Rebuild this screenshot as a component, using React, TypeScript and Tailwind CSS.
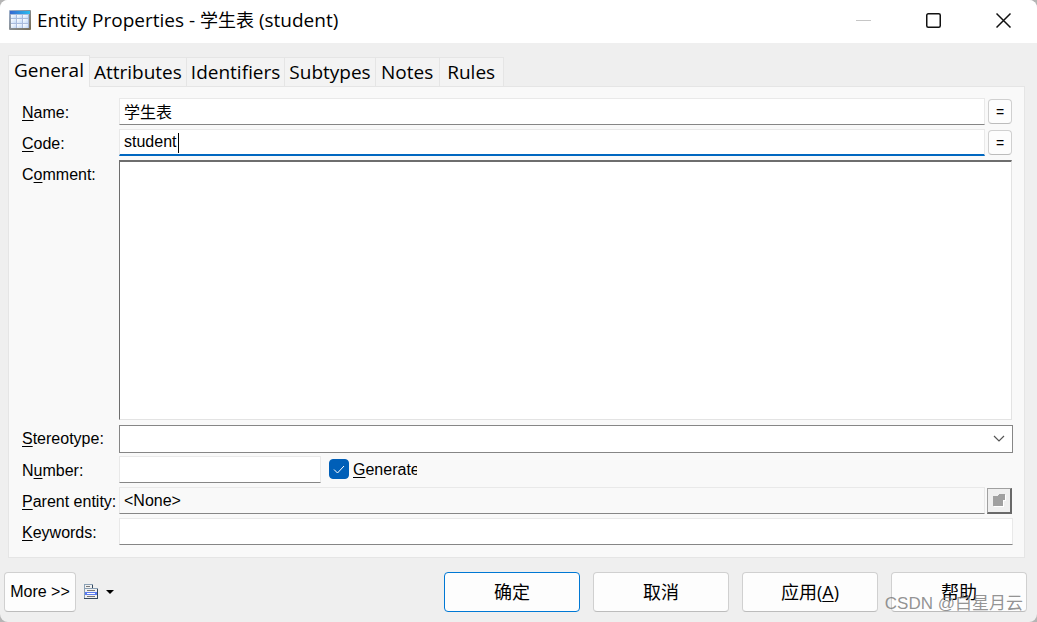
import React, { useState } from 'react';

const TABS = ['General', 'Attributes', 'Identifiers', 'Subtypes', 'Notes', 'Rules'];

const uiFont = "font-['Open_Sans','Noto_Sans_CJK_SC',sans-serif]";
const formFont = "font-['Liberation_Sans','Noto_Sans_CJK_SC',sans-serif]";

const fieldBase = 'block w-full min-w-0 border border-[#e9e9e9] px-1 outline-none';
const field = `${fieldBase} h-[27px] border-b-[#868686] bg-white pb-0.5`;

const TableIcon: React.FC = () => (
  <svg width="22" height="20" viewBox="0 0 22 20" aria-hidden="true">
    <defs>
      <linearGradient id="frame" x1="0" y1="0" x2="1" y2="1">
        <stop offset="0" stopColor="#9cb0cf" />
        <stop offset="1" stopColor="#756c55" />
      </linearGradient>
      <linearGradient id="head" x1="0" y1="0" x2="1" y2="0">
        <stop offset="0" stopColor="#3668d0" />
        <stop offset="1" stopColor="#29bdf0" />
      </linearGradient>
      <linearGradient id="cells" x1="0" y1="0" x2="1" y2="1">
        <stop offset="0" stopColor="#ffffff" />
        <stop offset="1" stopColor="#c3daf8" />
      </linearGradient>
    </defs>
    <rect width="22" height="20" rx="1" fill="url(#frame)" />
    <rect x="1" y="1" width="20" height="3" fill="url(#head)" />
    <rect x="2" y="4" width="18" height="14" fill="#a9bbdc" />
    {[2, 8, 14].map((x) =>
      [5, 9, 14].map((y) => (
        <rect key={`${x}-${y}`} x={x} y={y} width="5" height={y === 5 ? 3 : 4} fill="url(#cells)" />
      ))
    )}
  </svg>
);

const MenuIcon: React.FC = () => (
  <svg width="14" height="16" viewBox="0 0 14 16" shapeRendering="crispEdges" aria-hidden="true">
    <path d="M0 0h9v4h5v11H0z" fill="#8ba0b4" />
    <path d="M1 1h7v4h5v9H1z" fill="#f1f1f1" />
    <path d="M8 1h1v4H8zM13 5h1v10h-1zM0 14h14v1H0z" fill="#34475c" />
    <path d="M1 4h8v1H1z" fill="#8ba0b4" />
    <path d="M2 2h4v1H2zM3 6h8v1H3zM3 12h8v1H3z" fill="#777777" />
    <path d="M1 8h12v3H1z" fill="#5b7cf0" />
    <path d="M3 9h8v1H3z" fill="#ffffff" />
  </svg>
);

const Label: React.FC<{ id: string; before?: string; hot: string; after: string }> = ({
  id,
  before,
  hot,
  after,
}) => (
  <label htmlFor={id} className="h-[27px] whitespace-nowrap leading-[30px]">
    {before}
    <span className="underline underline-offset-2">{hot}</span>
    {after}
  </label>
);

const EqualsButton: React.FC<{ label: string }> = ({ label }) => (
  <button
    type="button"
    aria-label={label}
    className="h-[25px] w-6 shrink-0 rounded border border-[#d0d0d0] border-b-[#bcbcbc] bg-[#fdfdfd] text-sm leading-[22px]"
  >
    =
  </button>
);

const App: React.FC = () => {
  const [tab, setTab] = useState('General');
  const [name, setName] = useState('学生表');
  const [code, setCode] = useState('student');
  const [comment, setComment] = useState('');
  const [generate, setGenerate] = useState(true);

  const action =
    'h-10 max-w-[136px] flex-1 rounded border bg-[#fdfdfd] text-lg leading-6';
  const plain = `${action} border-[#d0d0d0] border-b-[#bcbcbc]`;

  return (
    <div className="bg-[#b5b5b5]">
      <div
        className={`relative flex min-h-screen flex-col overflow-hidden rounded-lg bg-[#efefef] text-black ${uiFont}`}
      >
        <header className="flex h-[43px] shrink-0 items-center bg-white pr-[25px] pb-[3px] pl-[9px]">
          <TableIcon />
          <h1 className="ml-1.5 flex-1 text-[19px]">
            Entity Properties - <span className="text-lg">学生表</span> (student)
          </h1>
          <div className="flex items-center gap-[54px]">
            <button type="button" aria-label="Minimize" disabled>
              <svg width="16" height="16" viewBox="0 0 16 16">
                <path d="M0 8.5h15" stroke="#c6c6c6" />
              </svg>
            </button>
            <button type="button" aria-label="Maximize">
              <svg width="16" height="16" viewBox="0 0 16 16" fill="none">
                <rect x="0.75" y="1.75" width="13.5" height="13.5" rx="1.5" stroke="#111111" strokeWidth="1.5" />
              </svg>
            </button>
            <button type="button" aria-label="Close">
              <svg width="16" height="16" viewBox="0 0 16 16">
                <path d="M0.5 1.5l14 14M14.5 1.5l-14 14" stroke="#111111" strokeWidth="1.5" />
              </svg>
            </button>
          </div>
        </header>

        <main className="flex flex-1 flex-col pt-3 pr-3 pl-2">
          <div role="tablist" className="z-10 -mb-px flex items-end text-[19px]">
            {TABS.map((t) => (
              <button
                key={t}
                type="button"
                role="tab"
                aria-selected={tab === t}
                onClick={() => setTab(t)}
                className={
                  tab === t
                    ? 'h-8 border border-b-0 border-[#e5e5e5] bg-[#f9f9f9] px-[5px] pb-1 leading-7'
                    : 'h-[30px] min-w-16 border border-l-0 border-[#e5e5e5] bg-[#f3f3f3] px-1 leading-7'
                }
              >
                {t}
              </button>
            ))}
          </div>

          <form
            role="tabpanel"
            className={`flex flex-1 flex-col border border-[#e5e5e5] bg-[#f9f9f9] pt-[11px] pr-[11px] pb-3 pl-[13px] text-base ${formFont}`}
          >
            <div className="grid flex-1 grid-cols-[97px_minmax(0,1fr)] grid-rows-[27px_27px_1fr_28px_27px_27px_27px] gap-y-1">
              <Label id="name" hot="N" after="ame:" />
              <div className="flex items-center gap-[3px] pr-px">
                <input id="name" className={field} value={name} onChange={(e) => setName(e.target.value)} />
                <EqualsButton label="Copy code from name" />
              </div>

              <Label id="code" hot="C" after="ode:" />
              <div className="flex items-center gap-[3px] pr-px">
                <div className="relative flex-1">
                  <input
                    id="code"
                    className={`${fieldBase} h-[27px] border-b-2 border-b-[#0067c0] bg-white`}
                    value={code}
                    onChange={(e) => setCode(e.target.value)}
                  />
                  <span className="absolute top-1 left-[59px] h-5 w-px bg-black" />
                </div>
                <EqualsButton label="Copy name from code" />
              </div>

              <Label id="comment" before="C" hot="o" after="mment:" />
              <textarea
                id="comment"
                className="mr-px block resize-none border border-t-2 border-[#e3e3e3] border-t-[#6e6e6e] border-l-[#6e6e6e] bg-white px-1 outline-none"
                value={comment}
                onChange={(e) => setComment(e.target.value)}
              />

              <Label id="stereotype" hot="S" after="tereotype:" />
              <div className="relative pt-px">
                <select
                  id="stereotype"
                  className="block h-7 w-full appearance-none border border-[#868686] bg-white px-1 outline-none"
                >
                  <option value=""></option>
                </select>
                <svg
                  className="pointer-events-none absolute top-[11px] right-2"
                  width="12"
                  height="8"
                  viewBox="0 0 12 8"
                  fill="none"
                >
                  <path d="M1 1l5 5 5-5" stroke="#555555" strokeWidth="1.2" />
                </svg>
              </div>

              <Label id="number" before="N" hot="u" after="mber:" />
              <div className="flex items-center">
                <div className="w-[202px]">
                  <input id="number" className={field} />
                </div>
                <label className="ml-2 flex items-start">
                  <span className="relative flex">
                    <input
                      type="checkbox"
                      className="size-5 appearance-none rounded border border-[#868686] bg-white checked:border-[#005fb8] checked:bg-[#005fb8]"
                      checked={generate}
                      onChange={(e) => setGenerate(e.target.checked)}
                    />
                    <svg
                      className="pointer-events-none absolute inset-0"
                      width="20"
                      height="20"
                      viewBox="0 0 20 20"
                      fill="none"
                    >
                      <path d="M5 10.5l3.5 3.5L15 7" stroke="#ffffff" />
                    </svg>
                  </span>
                  <span className="ml-1 w-16 overflow-hidden leading-[22px] whitespace-nowrap">
                    <span className="underline underline-offset-2">G</span>enerate
                  </span>
                </label>
              </div>

              <Label id="parent" hot="P" after="arent entity:" />
              <div className="flex items-center gap-0.5 pr-px">
                <input
                  id="parent"
                  className={`${fieldBase} h-[27px] border-b-[#868686] bg-[#f9f9f9]`}
                  value="<None>"
                  readOnly
                />
                <button
                  type="button"
                  aria-label="Parent entity properties"
                  disabled
                  className="flex h-[26px] w-[25px] shrink-0 items-center justify-center border border-r-2 border-b-2 border-[#a0a0a0] border-r-[#696969] border-b-[#696969] bg-[#efefef]"
                >
                  <svg width="14" height="14" viewBox="0 0 14 14" shapeRendering="crispEdges">
                    <path d="M2 4h5V2h7v6h-2v6H2z" fill="#ffffff" />
                    <path d="M1 3h5V2h1V1h6v6h-2v6H1z" fill="#a0a0a0" />
                  </svg>
                </button>
              </div>

              <Label id="keywords" hot="K" after="eywords:" />
              <input id="keywords" className={field} />
            </div>
          </form>
        </main>

        <footer className="flex shrink-0 items-center pt-3.5 pr-2.5 pb-2.5 pl-1">
          <button
            type="button"
            className={`h-10 w-[72px] shrink-0 rounded border border-[#d0d0d0] border-b-[#bcbcbc] bg-[#fdfdfd] text-base whitespace-nowrap ${formFont}`}
          >
            More &gt;&gt;
          </button>
          <button type="button" aria-label="Menu" className="ml-2 flex shrink-0 items-center gap-2">
            <MenuIcon />
            <svg width="8" height="4" viewBox="0 0 8 4">
              <path d="M0 0h8L4 4z" fill="#000000" />
            </svg>
          </button>
          <div className="ml-4 flex flex-1 justify-end gap-[13px]">
            <button type="button" className={`${action} border-[#0078d4]`}>
              确定
            </button>
            <button type="button" className={plain}>
              取消
            </button>
            <button type="button" className={plain}>
              应用(<span className="underline underline-offset-2">A</span>)
            </button>
            <button type="button" className={plain}>
              帮助
            </button>
          </div>
        </footer>

        <span
          className={`pointer-events-none absolute right-3.5 bottom-1.5 text-[17px] leading-6 text-[#777777]/80 ${formFont}`}
        >
          CSDN @白星月云
        </span>
      </div>
    </div>
  );
};

export default App;
